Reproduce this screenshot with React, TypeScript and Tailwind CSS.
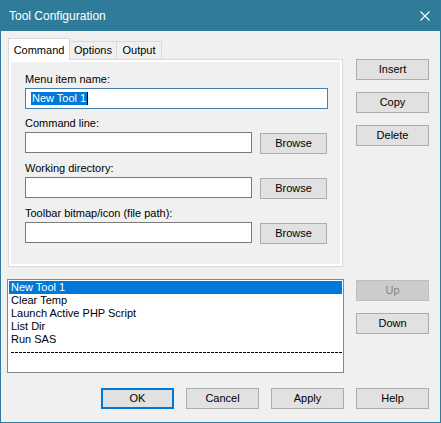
import React from 'react';

const font = "font-['Liberation_Sans',Arial,sans-serif]";

type BtnProps = {
  label: string;
  primary?: boolean;
  disabled?: boolean;
  className?: string;
};

// width comes from className so it can be overridden (Browse is narrower)
const DlgButton: React.FC<BtnProps> = ({ label, primary, disabled, className = 'w-[73px]' }) => {
  let look = 'border border-[#adadad] bg-[#e1e1e1] text-black';
  if (primary) look = 'border-2 border-[#0078d7] bg-[#e1e1e1] text-black';
  if (disabled) look = 'border border-[#bfbfbf] bg-[#cccccc] text-[#838383]';
  return (
    <div className={`h-[21px] flex items-center justify-center text-[11px] ${look} ${className}`}>
      {label}
    </div>
  );
};

const Field: React.FC<{ label: string; browse?: boolean; children?: React.ReactNode; focused?: boolean }> = ({
  label,
  browse = true,
  children,
  focused,
}) => (
  <div className="flex flex-col mb-[7px]">
    <div className="h-[14px] leading-[14px] text-[11px] text-black">{label}</div>
    <div className="flex items-start mt-[2px]">
      <div
        className={`h-[21px] bg-white border flex items-center pl-[5px] ${
          browse ? 'w-[227px]' : 'w-[303px]'
        } ${focused ? 'border-[#4a7eab]' : 'border-[#7a7a7a]'}`}
      >
        {children}
      </div>
      {browse && <DlgButton label="Browse" className="ml-[8px] mt-px w-[67px]" />}
    </div>
  </div>
);

const tools = ['New Tool 1', 'Clear Temp', 'Launch Active PHP Script', 'List Dir', 'Run SAS'];

const App: React.FC = () => {
  return (
    <div className={`w-[441px] h-[423px] bg-[#2e7b9a] flex flex-col px-px pb-px ${font}`}>
      {/* title bar */}
      <div className="h-[31px] flex items-center justify-between pl-[8px] pr-[10px] text-white text-[12px]">
        <span>Tool Configuration</span>
        <svg width="10" height="10" viewBox="0 0 10 10">
          <path d="M0.5 0.5 L9.5 9.5 M9.5 0.5 L0.5 9.5" stroke="#ffffff" strokeWidth="1.1" />
        </svg>
      </div>

      <div className="flex-1 bg-[#f0f0f0] flex flex-col pt-[7px]">
        {/* top: tabs + side buttons */}
        <div className="flex pl-[7px]">
          <div className="w-[335px] flex flex-col">
            <div className="flex items-end h-[21px] text-[11px] text-black">
              <div className="relative z-10 w-[62px] h-[22px] -mb-px bg-white border-x border-t border-[#d9d9d9] flex items-start justify-center pt-[3px]">
                Command
              </div>
              <div className="w-[47px] h-[18px] border-t border-r border-[#d9d9d9] flex items-center justify-center">
                Options
              </div>
              <div className="w-[45px] h-[18px] border-t border-r border-[#d9d9d9] flex items-center justify-center">
                Output
              </div>
            </div>
            <div className="h-[208px] border border-[#d9d9d9] bg-white p-[2px]">
              <div className="h-full bg-[#f0f0f0] pl-[14px] pt-[10px]">
                <Field label="Menu item name:" browse={false} focused>
                  <span className="bg-[#0078d7] text-white text-[11px] leading-[13px] h-[13px] px-px">New Tool 1</span>
                  <span className="w-px h-[13px] bg-black" />
                </Field>
                <Field label="Command line:" />
                <Field label="Working directory:" />
                <Field label="Toolbar bitmap/icon (file path):" />
              </div>
            </div>
          </div>
          <div className="ml-[13px] pt-[21px] flex flex-col gap-[12px]">
            <DlgButton label="Insert" />
            <DlgButton label="Copy" />
            <DlgButton label="Delete" />
          </div>
        </div>

        {/* tool list */}
        <div className="flex pl-[6px] mt-[12px]">
          <div className="w-[337px] h-[94px] bg-white border border-[#828790] p-px text-[11px]">
            {tools.map((t, i) => (
              <div
                key={t}
                className={`h-[13px] leading-[13px] pl-[2px] ${i === 0 ? 'bg-[#0078d7] text-white' : 'text-black'}`}
              >
                {t}
              </div>
            ))}
            <div className="h-[13px] flex items-center pl-[2px]">
              <div className="h-px w-full bg-[repeating-linear-gradient(90deg,#000_0_3px,transparent_3px_4px)]" />
            </div>
          </div>
          <div className="ml-[12px] pt-px flex flex-col gap-[12px]">
            <DlgButton label="Up" disabled />
            <DlgButton label="Down" />
          </div>
        </div>

        {/* dialog buttons */}
        <div className="flex justify-end gap-[12px] mt-[15px] pr-[11px]">
          <DlgButton label="OK" primary />
          <DlgButton label="Cancel" />
          <DlgButton label="Apply" />
          <DlgButton label="Help" />
        </div>
      </div>
    </div>
  );
};

export default App;
